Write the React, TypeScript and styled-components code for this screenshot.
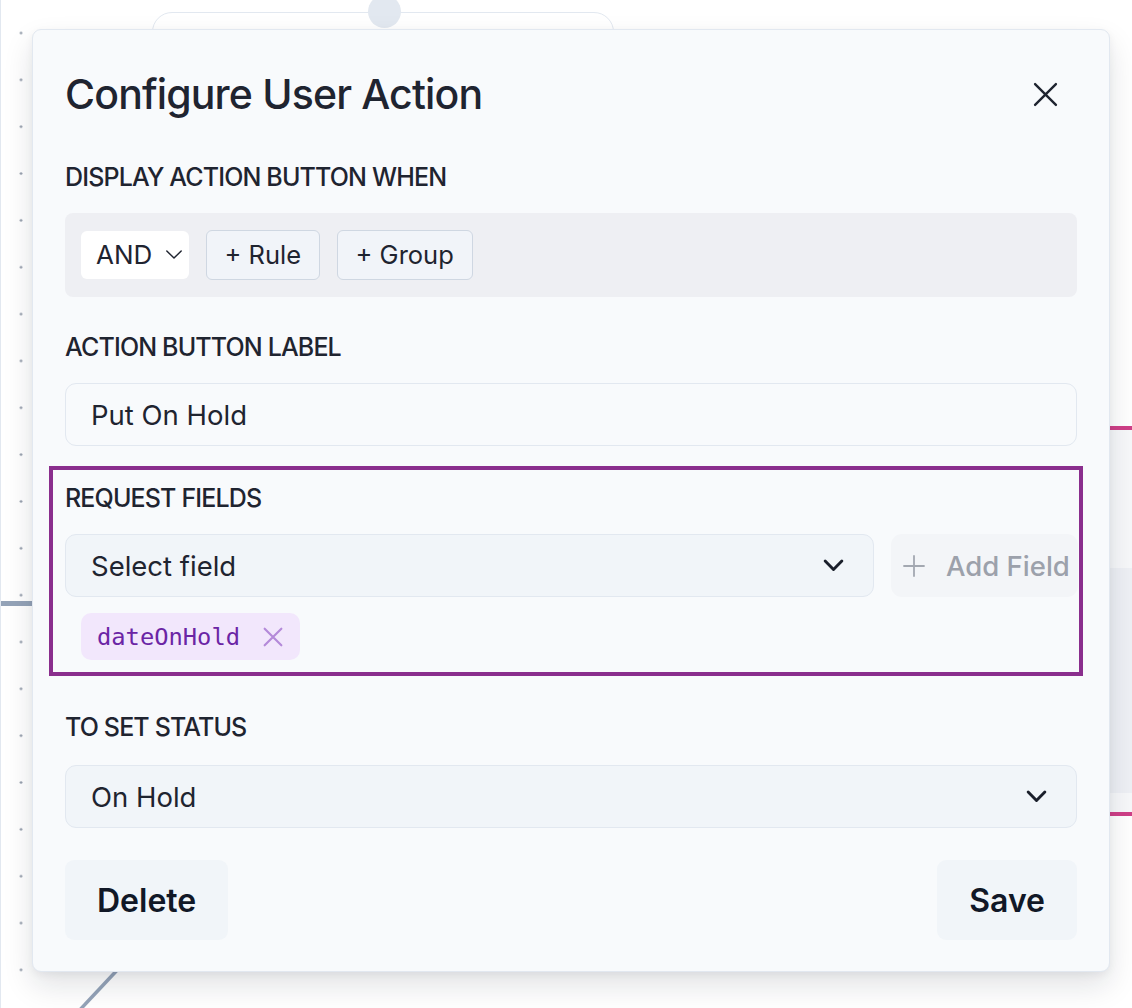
import React from "react";
import styled, { createGlobalStyle } from "styled-components";

const GlobalStyle = createGlobalStyle`
  html, body { margin: 0; padding: 0; background: #ffffff; }
  body { font-family: Inter, "Noto Sans", sans-serif; -webkit-font-smoothing: antialiased; }
  * { box-sizing: border-box; }
`;

const Canvas = styled.div`
  position: relative;
  width: 1132px;
  height: 1008px;
  overflow: hidden;
  background-color: #ffffff;
  background-image: radial-gradient(circle, #98a1ae 1px, transparent 1.5px);
  background-size: 46.85px 46.85px;
  background-position: -3.4px 9.6px;
  border-left: 1px solid #e2e8f0;
`;

const TopNode = styled.div`
  position: absolute;
  left: 151px;
  top: 12px;
  width: 462px;
  height: 120px;
  background: #ffffff;
  border: 1.5px solid #e2e8f0;
  border-radius: 20px;
`;

const Handle = styled.div`
  position: absolute;
  left: 367px;
  top: -5px;
  width: 33px;
  height: 33px;
  border-radius: 50%;
  background: #e2e8f0;
`;

const EdgeStub = styled.div`
  position: absolute;
  left: 0;
  top: 601px;
  width: 31px;
  height: 4.5px;
  background: #94a3b8;
`;

const EdgeCurve = styled.svg`
  position: absolute;
  left: -1px;
  top: 900px;
  overflow: visible;
`;

const RightNode = styled.div`
  position: absolute;
  left: 999px;
  top: 426px;
  width: 300px;
  height: 390px;
  background: #f7f8fa;
  border-top: 4px solid #cf3f87;
  border-bottom: 4px solid #cf3f87;
  padding-top: 138px;
`;

const RightPanel = styled.div`
  height: 225px;
  background: #eef0f5;
`;

const Modal = styled.div`
  position: absolute;
  left: 31px;
  top: 29px;
  width: 1078px;
  background: #f8fafc;
  border: 1px solid #e2e8f0;
  border-radius: 9px;
  box-shadow: 0 14px 30px rgba(15, 23, 42, 0.12), 0 3px 8px rgba(15, 23, 42, 0.05);
  padding: 32px 32px 31px;
  display: flex;
  flex-direction: column;
  gap: 34.5px;
`;

const Header = styled.div`
  display: flex;
  align-items: center;
  justify-content: space-between;
  height: 64px;
`;

const Title = styled.h2`
  margin: 0;
  font-size: 41px;
  line-height: 1;
  font-weight: 500;
  color: #1f2430;
  letter-spacing: -0.85px;
`;

const CloseButton = styled.button`
  width: 64px;
  height: 64px;
  display: flex;
  align-items: center;
  justify-content: center;
  background: transparent;
  border: 0;
  padding: 0;
  color: #1f2430;
  cursor: pointer;
`;

const Section = styled.div<{ $gap: number }>`
  display: flex;
  flex-direction: column;
  gap: ${(p) => p.$gap}px;
`;

const Highlight = styled(Section)`
  margin: -14.5px -6px 0 -16px;
  border: 4px solid #8a2e8d;
  padding: 11.5px 1px 12px 12px;
`;

const FieldStack = styled.div`
  display: flex;
  flex-direction: column;
  gap: 16px;
`;

const Label = styled.div`
  font-size: 25px;
  line-height: 32px;
  font-weight: 500;
  color: #1f2430;
  text-transform: uppercase;
  letter-spacing: -0.85px;
`;

const RuleBar = styled.div`
  display: flex;
  align-items: center;
  gap: 16.5px;
  height: 84px;
  padding: 0 16px;
  background: #eeeff3;
  border-radius: 8px;
`;

const Combinator = styled.div`
  display: flex;
  align-items: center;
  justify-content: space-between;
  width: 108px;
  height: 48px;
  padding: 0 6px 0 15px;
  background: #ffffff;
  border-radius: 6px;
  font-size: 26px;
  color: #1f2430;
`;

const RuleButton = styled.button`
  height: 50px;
  padding: 0 18px;
  border: 1.5px solid #cfd7e2;
  background: #f1f4f9;
  border-radius: 6px;
  font-family: inherit;
  font-size: 25.5px;
  color: #1f2430;
`;

const TextInput = styled.input`
  width: 100%;
  height: 63px;
  padding: 0 25px;
  border: 1.5px solid #e2e8f0;
  background: #f8fafc;
  border-radius: 11px;
  font-family: inherit;
  font-size: 27.5px;
  color: #1f2430;
  outline: none;
`;

const SelectBox = styled.div`
  flex: 1 1 auto;
  min-width: 0;
  display: flex;
  align-items: center;
  justify-content: space-between;
  height: 63px;
  padding: 0 29px 0 25px;
  border: 1.5px solid #e2e8f0;
  background: #f1f5f9;
  border-radius: 11px;
  font-size: 27.5px;
  color: #1f2430;
`;

const FieldRow = styled.div`
  display: flex;
  gap: 17px;
`;

const AddFieldButton = styled.button`
  flex: 0 0 187px;
  height: 63px;
  display: flex;
  align-items: center;
  gap: 21px;
  padding: 0 0 0 12px;
  border: 0;
  border-radius: 11px;
  background: #f3f5f8;
  font-family: inherit;
  font-size: 27.5px;
  font-weight: 500;
  color: #9ca1ab;
  white-space: nowrap;
`;

const Tag = styled.div`
  align-self: flex-start;
  margin-left: 16px;
  height: 47px;
  display: inline-flex;
  align-items: center;
  gap: 23px;
  padding: 0 17px 0 16px;
  background: #f2e7fc;
  border-radius: 10px;
  font-family: "DejaVu Sans Mono", "Liberation Mono", monospace;
  font-size: 23.75px;
  color: #6b25a5;
`;

const Footer = styled.div`
  display: flex;
  justify-content: space-between;
  margin-top: -2.5px;
`;

const FooterButton = styled.button`
  height: 80px;
  padding: 0 32px;
  border: 0;
  border-radius: 9px;
  background: #f1f5f9;
  font-family: inherit;
  font-size: 32px;
  font-weight: 600;
  color: #111827;
`;

const Chevron = ({ size, stroke, thin }: { size: number; stroke: string; thin?: boolean }) => (
  <svg width={size} height={size / 2 + 2} viewBox="0 0 20 12" fill="none">
    <path d="M2 2 L10 10 L18 2" stroke={stroke} strokeWidth={thin ? 1.6 : 2.8} strokeLinecap="round" strokeLinejoin="round" />
  </svg>
);

const CrossIcon = ({ size, stroke, width }: { size: number; stroke: string; width: number }) => (
  <svg width={size} height={size} viewBox="0 0 24 24" fill="none">
    <path d="M2 2 L22 22 M22 2 L2 22" stroke={stroke} strokeWidth={width} strokeLinecap="round" />
  </svg>
);

const PlusIcon = () => (
  <svg width={22} height={22} viewBox="0 0 22 22" fill="none">
    <path d="M11 1 V21 M1 11 H21" stroke="#a3a8b1" strokeWidth={1.8} strokeLinecap="round" />
  </svg>
);

export default function App() {
  return (
    <>
      <GlobalStyle />
      <Canvas>
        <TopNode />
        <Handle />
        <EdgeStub />
        <EdgeCurve width={300} height={108} viewBox="0 0 300 108">
          <path d="M 136 50 Q 104 84 76 114" stroke="#94a3b8" strokeWidth={3.5} fill="none" />
        </EdgeCurve>
        <RightNode>
          <RightPanel />
        </RightNode>

        <Modal>
          <Header>
            <Title>Configure User Action</Title>
            <CloseButton aria-label="Close">
              <CrossIcon size={25} stroke="#1f2430" width={2.3} />
            </CloseButton>
          </Header>

          <Section $gap={20}>
            <Label>Display action button when</Label>
            <RuleBar>
              <Combinator>
                AND
                <Chevron size={18} stroke="#1f2430" thin />
              </Combinator>
              <RuleButton>+ Rule</RuleButton>
              <RuleButton>+ Group</RuleButton>
            </RuleBar>
          </Section>

          <Section $gap={20}>
            <Label>Action button label</Label>
            <TextInput readOnly defaultValue="Put On Hold" />
          </Section>

          <Highlight $gap={20.5}>
            <Label>Request fields</Label>
            <FieldStack>
              <FieldRow>
                <SelectBox>
                  Select field
                  <Chevron size={21} stroke="#1a1f2b" />
                </SelectBox>
                <AddFieldButton>
                  <PlusIcon />
                  Add Field
                </AddFieldButton>
              </FieldRow>
              <Tag>
                dateOnHold
                <CrossIcon size={20} stroke="#b48ad9" width={2.6} />
              </Tag>
            </FieldStack>
          </Highlight>

          <Section $gap={22.5}>
            <Label>To set status</Label>
            <SelectBox>
              On Hold
              <Chevron size={21} stroke="#1a1f2b" />
            </SelectBox>
          </Section>

          <Footer>
            <FooterButton>Delete</FooterButton>
            <FooterButton>Save</FooterButton>
          </Footer>
        </Modal>
      </Canvas>
    </>
  );
}
